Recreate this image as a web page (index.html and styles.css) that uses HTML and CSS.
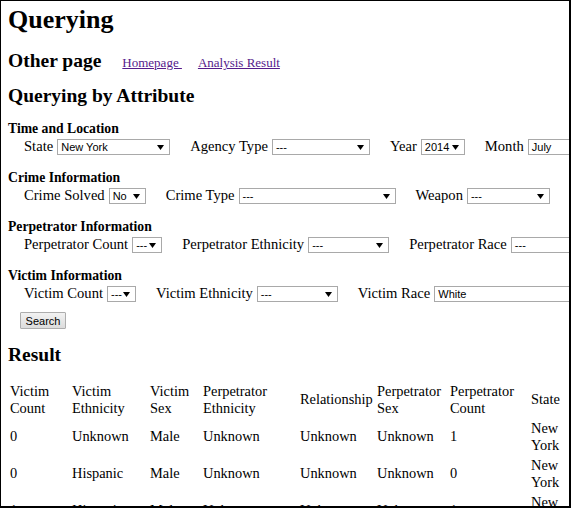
FILE: index.html
```html
<!DOCTYPE html>
<html>
<head>
<meta charset="utf-8">
<link rel="stylesheet" href="styles.css">
</head>
<body>
<div class="frame">
  <div class="page">
    <h1 class="title">Querying</h1>
    <div class="other">
      <h2 class="h2">Other page</h2>
      <a class="link" href="#">Homepage </a>
      <a class="link" href="#">Analysis Result</a>
    </div>
    <h2 class="h2 by">Querying by Attribute</h2>

    <div class="section">
      <div class="sec-title">Time and Location</div>
      <div class="row">
        <div class="field"><span class="lbl">State</span><span class="sel w113"><span class="val">New York</span><svg class="arr" width="7" height="6" viewBox="0 0 7 6"><path d="M0 1h7L3.5 6z" fill="#000"/></svg></span></div>
        <div class="field"><span class="lbl">Agency Type</span><span class="sel w98"><span class="val">---</span><svg class="arr" width="7" height="6" viewBox="0 0 7 6"><path d="M0 1h7L3.5 6z" fill="#000"/></svg></span></div>
        <div class="field"><span class="lbl">Year</span><span class="sel w44"><span class="val">2014</span><svg class="arr" width="7" height="6" viewBox="0 0 7 6"><path d="M0 1h7L3.5 6z" fill="#000"/></svg></span></div>
        <div class="field"><span class="lbl">Month</span><span class="sel w90"><span class="val">July</span><svg class="arr" width="7" height="6" viewBox="0 0 7 6"><path d="M0 1h7L3.5 6z" fill="#000"/></svg></span></div>
      </div>
    </div>

    <div class="section">
      <div class="sec-title">Crime Information</div>
      <div class="row">
        <div class="field"><span class="lbl">Crime Solved</span><span class="sel w37"><span class="val">No</span><svg class="arr" width="7" height="6" viewBox="0 0 7 6"><path d="M0 1h7L3.5 6z" fill="#000"/></svg></span></div>
        <div class="field"><span class="lbl">Crime Type</span><span class="sel w157"><span class="val">---</span><svg class="arr" width="7" height="6" viewBox="0 0 7 6"><path d="M0 1h7L3.5 6z" fill="#000"/></svg></span></div>
        <div class="field"><span class="lbl">Weapon</span><span class="sel w83"><span class="val">---</span><svg class="arr" width="7" height="6" viewBox="0 0 7 6"><path d="M0 1h7L3.5 6z" fill="#000"/></svg></span></div>
        <div class="field"><span class="lbl">Season</span><span class="sel w83"><span class="val">---</span><svg class="arr" width="7" height="6" viewBox="0 0 7 6"><path d="M0 1h7L3.5 6z" fill="#000"/></svg></span></div>
      </div>
    </div>

    <div class="section">
      <div class="sec-title">Perpetrator Information</div>
      <div class="row">
        <div class="field"><span class="lbl">Perpetrator Count</span><span class="sel w30"><span class="val">---</span><svg class="arr" width="7" height="6" viewBox="0 0 7 6"><path d="M0 1h7L3.5 6z" fill="#000"/></svg></span></div>
        <div class="field"><span class="lbl">Perpetrator Ethnicity</span><span class="sel w81"><span class="val">---</span><svg class="arr" width="7" height="6" viewBox="0 0 7 6"><path d="M0 1h7L3.5 6z" fill="#000"/></svg></span></div>
        <div class="field"><span class="lbl">Perpetrator Race</span><span class="sel w120"><span class="val">---</span><svg class="arr" width="7" height="6" viewBox="0 0 7 6"><path d="M0 1h7L3.5 6z" fill="#000"/></svg></span></div>
      </div>
    </div>

    <div class="section">
      <div class="sec-title">Victim Information</div>
      <div class="row">
        <div class="field"><span class="lbl">Victim Count</span><span class="sel w29"><span class="val">---</span><svg class="arr" width="7" height="6" viewBox="0 0 7 6"><path d="M0 1h7L3.5 6z" fill="#000"/></svg></span></div>
        <div class="field"><span class="lbl">Victim Ethnicity</span><span class="sel w81"><span class="val">---</span><svg class="arr" width="7" height="6" viewBox="0 0 7 6"><path d="M0 1h7L3.5 6z" fill="#000"/></svg></span></div>
        <div class="field"><span class="lbl">Victim Race</span><span class="sel w160"><span class="val">White</span><svg class="arr" width="7" height="6" viewBox="0 0 7 6"><path d="M0 1h7L3.5 6z" fill="#000"/></svg></span></div>
      </div>
    </div>

    <button class="btn" type="button">Search</button>

    <h2 class="h2 result">Result</h2>
    <table class="tbl">
      <colgroup>
        <col class="c1"><col class="c2"><col class="c3"><col class="c4"><col class="c5"><col class="c6"><col class="c7"><col class="c8">
      </colgroup>
      <tr><td>Victim Count</td><td>Victim Ethnicity</td><td>Victim Sex</td><td>Perpetrator Ethnicity</td><td>Relationship</td><td>Perpetrator Sex</td><td>Perpetrator Count</td><td>State</td></tr>
      <tr><td>0</td><td>Unknown</td><td>Male</td><td>Unknown</td><td>Unknown</td><td>Unknown</td><td>1</td><td>New York</td></tr>
      <tr><td>0</td><td>Hispanic</td><td>Male</td><td>Unknown</td><td>Unknown</td><td>Unknown</td><td>0</td><td>New York</td></tr>
      <tr><td>1</td><td>Hispanic</td><td>Male</td><td>Unknown</td><td>Unknown</td><td>Unknown</td><td>1</td><td>New York</td></tr>
    </table>
  </div>
</div>
</body>
</html>
```
FILE: styles.css
```css
html, body { margin: 0; padding: 0; background: #fff; }
.frame {
  width: 571px; height: 508px; box-sizing: border-box;
  border-top: 1px solid #000; border-left: 1px solid #000;
  border-right: 2px solid #000; border-bottom: 2px solid #000;
  overflow: hidden; position: relative;
}
.page {
  padding-left: 7px;
  font-family: "Liberation Serif", "Times New Roman", serif;
  color: #000;
  font-size: 14.6px;
}
.title { font-size: 26px; font-weight: bold; margin: 4px 0 0 0; line-height: 30px; }
.other { display: flex; align-items: baseline; margin-top: 14px; }
.h2 { font-size: 19.5px; font-weight: bold; margin: 0; line-height: 24px; white-space: nowrap; }
.link { font-size: 13px; color: #551a8b; margin-left: 21px; white-space: pre; }
.other .link + .link { margin-left: 16px; }
.by { margin-top: 11px; }
.section { margin-top: 13px; }
.section + .section { margin-top: 14px; }
.sec-title { font-size: 13.7px; font-weight: bold; line-height: 16px; }
.row { display: flex; align-items: center; gap: 20px; padding-left: 16px; height: 19px; white-space: nowrap; }
.field { display: flex; align-items: center; flex: none; }
.lbl { margin-right: 4px; }
.sel {
  display: inline-flex; align-items: center; justify-content: space-between;
  box-sizing: border-box; height: 16px; padding: 0 5px 0 3px;
  border: 1px solid #a9a9a9; background: #fff;
  font-family: "Liberation Sans", Arial, sans-serif; font-size: 11px; flex: none;
}
.val { line-height: 14px; }
.arr { flex: none; }
.w29 { width: 29px; } .w30 { width: 30px; } .w37 { width: 37px; } .w44 { width: 44px; }
.w81 { width: 81px; } .w83 { width: 83px; } .w90 { width: 90px; } .w98 { width: 98px; }
.w113 { width: 113px; } .w120 { width: 120px; } .w157 { width: 157px; } .w160 { width: 160px; }
.btn {
  display: block; margin: 9px 0 0 12px; height: 17px; width: 46px; padding: 0;
  font-family: "Liberation Sans", Arial, sans-serif; font-size: 11px; color: #000;
  background: linear-gradient(#f2f2f2, #dcdcdc); border: 1px solid #adadad; border-radius: 1px;
}
.result { margin-top: 14px; }
.tbl { border-collapse: separate; border-spacing: 2px; margin-top: 13px; font-size: 14.4px; table-layout: fixed; width: 556px; }
.tbl td { padding: 1px 0; vertical-align: middle; text-align: left; line-height: 16.5px; }
.c1 { width: 60px; } .c2 { width: 76px; } .c3 { width: 51px; } .c4 { width: 95px; }
.c5 { width: 75px; } .c6 { width: 71px; } .c7 { width: 79px; } .c8 { width: 33px; }
```
